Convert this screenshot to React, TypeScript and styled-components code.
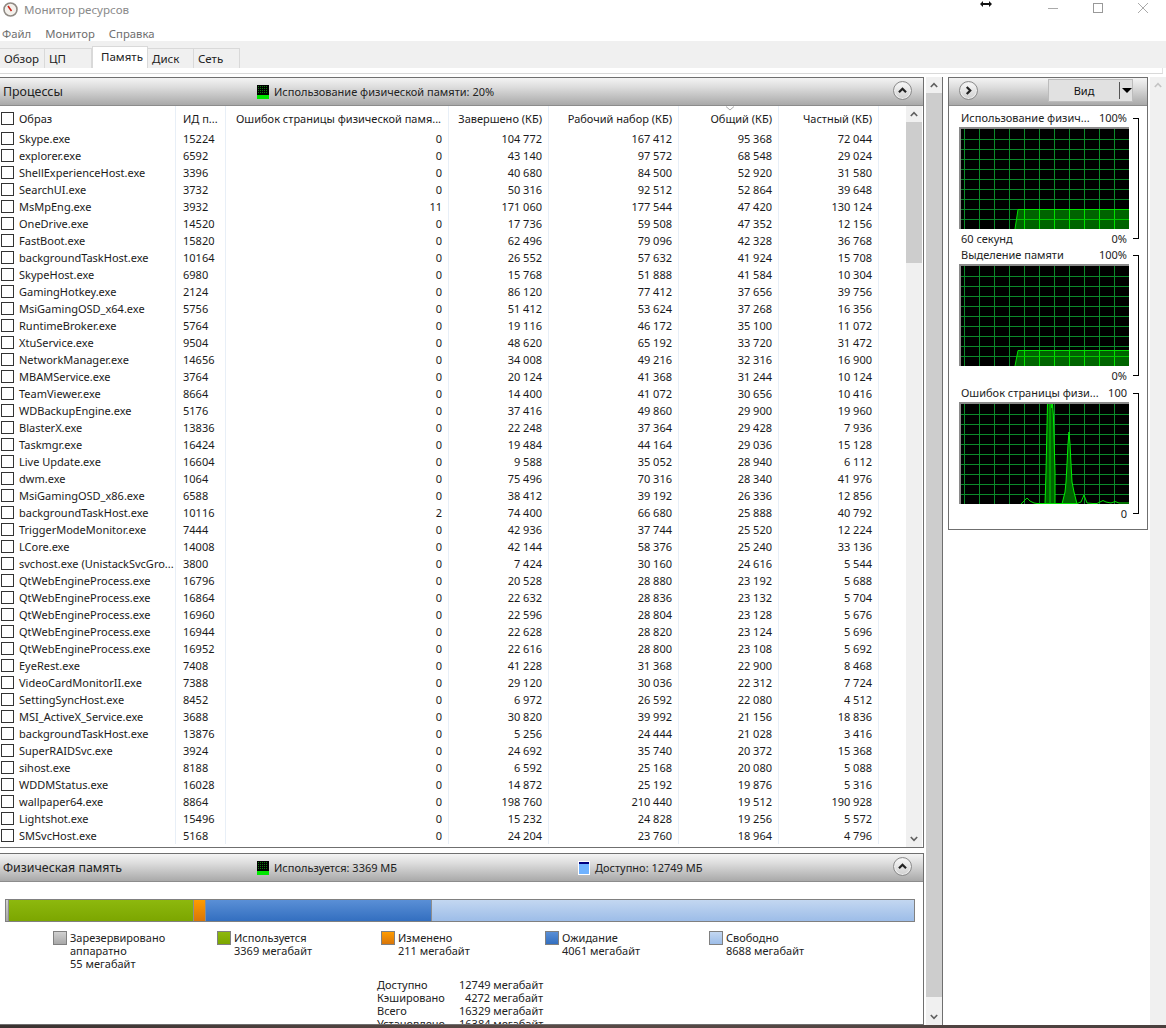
import { FC } from 'react';
import styled, { createGlobalStyle } from 'styled-components';

const Global = createGlobalStyle`
  html, body { margin: 0; padding: 0; background: #fff; }
  body { font: 11px/13px "Noto Sans", "Open Sans", sans-serif; color: #111; overflow: hidden; }
`

type Row = [string, string, string, string, string, string, string]
const rows: Row[] = [
  ['Skype.exe', '15224', '0', '104 772', '167 412', '95 368', '72 044'],
  ['explorer.exe', '6592', '0', '43 140', '97 572', '68 548', '29 024'],
  ['ShellExperienceHost.exe', '3396', '0', '40 680', '84 500', '52 920', '31 580'],
  ['SearchUI.exe', '3732', '0', '50 316', '92 512', '52 864', '39 648'],
  ['MsMpEng.exe', '3932', '11', '171 060', '177 544', '47 420', '130 124'],
  ['OneDrive.exe', '14520', '0', '17 736', '59 508', '47 352', '12 156'],
  ['FastBoot.exe', '15820', '0', '62 496', '79 096', '42 328', '36 768'],
  ['backgroundTaskHost.exe', '10164', '0', '26 552', '57 632', '41 924', '15 708'],
  ['SkypeHost.exe', '6980', '0', '15 768', '51 888', '41 584', '10 304'],
  ['GamingHotkey.exe', '2124', '0', '86 120', '77 412', '37 656', '39 756'],
  ['MsiGamingOSD_x64.exe', '5756', '0', '51 412', '53 624', '37 268', '16 356'],
  ['RuntimeBroker.exe', '5764', '0', '19 116', '46 172', '35 100', '11 072'],
  ['XtuService.exe', '9504', '0', '48 620', '65 192', '33 720', '31 472'],
  ['NetworkManager.exe', '14656', '0', '34 008', '49 216', '32 316', '16 900'],
  ['MBAMService.exe', '3764', '0', '20 124', '41 368', '31 244', '10 124'],
  ['TeamViewer.exe', '8664', '0', '14 400', '41 072', '30 656', '10 416'],
  ['WDBackupEngine.exe', '5176', '0', '37 416', '49 860', '29 900', '19 960'],
  ['BlasterX.exe', '13836', '0', '22 248', '37 364', '29 428', '7 936'],
  ['Taskmgr.exe', '16424', '0', '19 484', '44 164', '29 036', '15 128'],
  ['Live Update.exe', '16604', '0', '9 588', '35 052', '28 940', '6 112'],
  ['dwm.exe', '1064', '0', '75 496', '70 316', '28 340', '41 976'],
  ['MsiGamingOSD_x86.exe', '6588', '0', '38 412', '39 192', '26 336', '12 856'],
  ['backgroundTaskHost.exe', '10116', '2', '74 400', '66 680', '25 888', '40 792'],
  ['TriggerModeMonitor.exe', '7444', '0', '42 936', '37 744', '25 520', '12 224'],
  ['LCore.exe', '14008', '0', '42 144', '58 376', '25 240', '33 136'],
  ['svchost.exe (UnistackSvcGro...', '3800', '0', '7 424', '30 160', '24 616', '5 544'],
  ['QtWebEngineProcess.exe', '16796', '0', '20 528', '28 880', '23 192', '5 688'],
  ['QtWebEngineProcess.exe', '16864', '0', '22 632', '28 836', '23 132', '5 704'],
  ['QtWebEngineProcess.exe', '16960', '0', '22 596', '28 804', '23 128', '5 676'],
  ['QtWebEngineProcess.exe', '16944', '0', '22 628', '28 820', '23 124', '5 696'],
  ['QtWebEngineProcess.exe', '16952', '0', '22 616', '28 800', '23 108', '5 692'],
  ['EyeRest.exe', '7408', '0', '41 228', '31 368', '22 900', '8 468'],
  ['VideoCardMonitorII.exe', '7388', '0', '29 120', '30 036', '22 312', '7 724'],
  ['SettingSyncHost.exe', '8452', '0', '6 972', '26 592', '22 080', '4 512'],
  ['MSI_ActiveX_Service.exe', '3688', '0', '30 820', '39 992', '21 156', '18 836'],
  ['backgroundTaskHost.exe', '13876', '0', '5 256', '24 444', '21 028', '3 416'],
  ['SuperRAIDSvc.exe', '3924', '0', '24 692', '35 740', '20 372', '15 368'],
  ['sihost.exe', '8188', '0', '6 592', '25 168', '20 080', '5 088'],
  ['WDDMStatus.exe', '16028', '0', '14 872', '25 192', '19 876', '5 316'],
  ['wallpaper64.exe', '8864', '0', '198 760', '210 440', '19 512', '190 928'],
  ['Lightshot.exe', '15496', '0', '15 232', '24 828', '19 256', '5 572'],
  ['SMSvcHost.exe', '5168', '0', '24 204', '23 760', '18 964', '4 796'],
]

const Window = styled.div`
  width: 1166px;
  height: 1028px;
  display: flex;
  flex-direction: column;
  overflow: hidden;
  position: relative;
`
const TitleBar = styled.div`
  height: 19px;
  flex: none;
  display: flex;
  align-items: center;
  padding-left: 3px;
  gap: 6px;
  font-size: 11.6px;
  color: #8a8a8a;
`
const WinButtons = styled.div`
  margin-left: auto;
  display: flex;
  align-items: flex-start;
  align-self: flex-start;
  padding: 3px 18px 0 0;
  gap: 35px;
  svg { display: block; width: 10px; height: 10px; }
`
const ResizeCursor = styled.svg`
  position: absolute;
  left: 980px;
  top: 0;
  width: 12px;
  height: 8px;
`
const MenuBar = styled.div`
  height: 22px;
  flex: none;
  display: flex;
  align-items: center;
  padding: 6px 0 0 2px;
  box-sizing: border-box;
  gap: 14px;
  font-size: 11.3px;
  color: #6e6e6e;
`
const TabStrip = styled.div`
  height: 27px;
  flex: none;
  background: #f0f0f0;
  display: flex;
  align-items: flex-end;
`
const Tab = styled.div<{ $w: number; $active?: boolean }>`
  width: ${p => p.$w}px;
  height: ${p => (p.$active ? 22 : 20)}px;
  box-sizing: border-box;
  display: flex;
  align-items: center;
  padding-left: ${p => (p.$active ? 8 : 4)}px;
  background: ${p => (p.$active ? '#fff' : '#f0f0f0')};
  border: 1px solid #d9d9d9;
  border-width: 1px 1px 0 ${p => (p.$active ? 1 : 0)}px;
  color: #222;
  font-size: 11.5px;
  padding-bottom: ${p => (p.$active ? 2 : 0)}px;
`
const TabGap = styled.div`
  height: 5px;
  flex: none;
  margin-right: 3px;
  border-bottom: 1px solid #d9d9d9;
  border-right: 1px solid #e2e2e2;
`
const Main = styled.div`
  flex: 1;
  min-height: 0;
  display: flex;
  padding-top: 3px;
`
const LeftColumn = styled.div`
  width: 924px;
  flex: none;
  display: flex;
  flex-direction: column;
  gap: 5px;
`
const Panel = styled.section<{ $h?: number }>`
  ${p => (p.$h ? `height: ${p.$h}px; flex: none;` : 'flex: 1; min-height: 0;')}
  border: 1px solid #6f6f6f;
  border-left: 0;
  box-sizing: border-box;
  display: flex;
  flex-direction: column;
  overflow: hidden;
`
const PanelHeader = styled.header`
  height: 28px;
  flex: none;
  box-sizing: border-box;
  display: flex;
  align-items: center;
  background: linear-gradient(#f4f4f4 0%, #dcdcdc 35%, #a9a9a9 100%);
  border-bottom: 1px solid #8c8c8c;
  position: relative;
`
const PanelTitle = styled.h2`
  margin: 0 0 0 3px;
  width: 254px;
  font: 400 12.4px/18px "Noto Sans", sans-serif;
  color: #222;
`
const Indicator = styled.div<{ $w?: number }>`
  display: flex;
  align-items: center;
  gap: 5px;
  color: #222;
  font-size: 11px;
  ${p => p.$w && `width: ${p.$w}px; flex: none;`}
`
const Swatch = styled.svg`
  width: 12px;
  height: 14px;
  flex: none;
`
const CircleBtn = styled.button<{ $right?: number; $left?: number }>`
  width: 19px;
  height: 19px;
  padding: 0;
  margin-top: -2px;
  border-radius: 50%;
  border: 1px solid #8b8b8b;
  background: linear-gradient(#fafafa, #cfcfcf);
  display: flex;
  align-items: center;
  justify-content: center;
  flex: none;
  box-shadow: inset 0 0 0 1px #ededed;
  ${p => p.$right !== undefined && `margin-left: auto; margin-right: ${p.$right}px;`}
  ${p => p.$left !== undefined && `margin-left: ${p.$left}px;`}
  svg { width: 11px; height: 11px; }
`
const TableArea = styled.div`
  flex: 1;
  min-height: 0;
  display: flex;
`
const Table = styled.div`
  flex: 1;
  min-width: 0;
`
const cols = '176px 50px 223px 100px 130px 100px 100px 27px'
const HeadRow = styled.div`
  display: grid;
  grid-template-columns: ${cols};
  height: 24px;
  align-items: stretch;
  position: relative;
`
const DataRow = styled.div`
  display: grid;
  grid-template-columns: ${cols};
  height: 17px;
`
const Cell = styled.div<{ $num?: boolean; $pad?: number }>`
  display: flex;
  align-items: center;
  border-right: 1px solid #e8eff7;
  box-sizing: border-box;
  white-space: nowrap;
  overflow: hidden;
  justify-content: ${p => (p.$num ? 'flex-end' : 'flex-start')};
  padding: ${p => (p.$num ? `0 ${p.$pad ?? 6}px 0 0` : `0 0 0 ${p.$pad ?? 7}px`)};
  color: #1a1a1a;
`
const Check = styled.span`
  width: 13px;
  height: 13px;
  flex: none;
  box-sizing: border-box;
  border: 1px solid #333;
  background: #fff;
  margin-right: 5px;
`
const SortMark = styled.svg`
  position: absolute;
  left: 725px;
  top: 0;
  width: 10px;
  height: 5px;
`
const Scrollbar = styled.div`
  width: 16px;
  flex: none;
  background: #f0f0f0;
  display: flex;
  flex-direction: column;
`
const ScrollArrow = styled.div`
  height: 16px;
  flex: none;
  display: flex;
  align-items: center;
  justify-content: center;
  svg { width: 8px; height: 6px; }
`
const Thumb = styled.div<{ $h: number }>`
  height: ${p => p.$h}px;
  flex: none;
  background: #cdcdcd;
`
const Spacer = styled.div`
  flex: 1;
`
const InnerScrollWrap = styled.div`
  flex: none;
  margin-right: 1px;
  display: flex;
`
const MemoryBody = styled.div`
  padding: 17px 0 0 5px;
`
const Bar = styled.div`
  width: 910px;
  height: 23px;
  box-sizing: border-box;
  border: 1px solid #808080;
  display: flex;
`
const Seg = styled.div<{ $w?: number; $c: [string, string] }>`
  ${p => (p.$w ? `width: ${p.$w}px; flex: none;` : 'flex: 1;')}
  box-sizing: border-box;
  background: linear-gradient(${p => p.$c[0]}, ${p => p.$c[1]});
  & + & { border-left: 1px solid #8d8d8d; }
`
const Legend = styled.div`
  display: grid;
  grid-template-columns: repeat(5, 164px);
  padding-left: 48px;
  margin-top: 9px;
  height: 47px;
`
const LegendItem = styled.div`
  display: flex;
  gap: 3px;
  color: #222;
`
const LegendBox = styled.span<{ $c: [string, string] }>`
  width: 14px;
  height: 14px;
  flex: none;
  box-sizing: border-box;
  border: 1px solid #808080;
  background: linear-gradient(${p => p.$c[0]}, ${p => p.$c[1]});
`
const Summary = styled.div`
  display: grid;
  grid-template-columns: 82px 84px;
  padding-left: 372px;
  color: #222;
  white-space: nowrap;
  > span:nth-child(even) { text-align: right; }
`
const OuterBar = styled.div`
  width: 17px;
  margin-left: 2px;
  box-sizing: border-box;
  border-right: 1px solid #6f6f6f;
  flex: none;
  display: flex;
`
const RightPanel = styled.section`
  width: 200px;
  height: 453px;
  margin-left: 5px;
  flex: none;
  box-sizing: border-box;
  border: 1px solid #6f6f6f;
  display: flex;
  flex-direction: column;
`
const ViewButton = styled.div`
  margin: -2px 14px 0 auto;
  width: 85px;
  height: 23px;
  box-sizing: border-box;
  background: #e1e1e1;
  border: 1px solid #bcbcbc;
  display: flex;
  align-items: center;
  color: #111;
  font-size: 11px;
`
const ViewLabel = styled.span`
  width: 71px;
  text-align: center;
  height: 17px;
  line-height: 17px;
  border-right: 1px solid #555;
`
const ViewArrow = styled.span`
  margin-left: 2px;
  width: 0;
  height: 0;
  border: 5px solid transparent;
  border-top: 5px solid #000;
  border-bottom: 0;
`
const GraphList = styled.div`
  padding: 5px 0 0 10px;
`
const GraphBlock = styled.div<{ $mt?: number }>`
  display: grid;
  grid-template-columns: 170px 9px;
  grid-template-rows: 16px 102px 19px;
  margin-top: ${p => p.$mt ?? 0}px;
  color: #222;
`
const GraphLabel = styled.div`
  display: flex;
  justify-content: space-between;
  padding: 0 2px;
  white-space: nowrap;
  line-height: 14px;
`
const GraphFoot = styled(GraphLabel)`
  grid-row: 3;
  align-items: center;
  line-height: 19px;
`
const Bracket = styled.div`
  grid-column: 2;
  grid-row: 1 / 4;
  margin: 7px 0 9px 4px;
  box-sizing: border-box;
  border: 1px solid #000;
  border-left: 0;
  width: 6px;
`
const GraphSvg = styled.svg`
  display: block;
  width: 170px;
  height: 102px;
  grid-column: 1;
  grid-row: 2;
`
const RightBar = styled.div`
  margin-left: 2px;
  width: 16px;
  flex: none;
  background: #f0f0f0;
  height: 100%;
`
const DesktopEdge = styled.div`
  height: 3px;
  flex: none;
  background: linear-gradient(90deg, #3a3230, #5a4a46 45%, #4a403e);
`

const Chevron: FC<{ dir: 'up' | 'down' | 'right'; color?: string }> = ({ dir, color = '#222' }) => {
  const d = dir === 'up' ? 'M1.8 6.6 5 3.4l3.2 3.2' : dir === 'down' ? 'M1.8 3.4 5 6.6l3.2-3.2' : 'M3.4 1.8 6.6 5l-3.2 3.2'
  return (
    <svg viewBox="0 0 10 10" fill="none">
      <path d={d} stroke={color} strokeWidth="2" />
    </svg>
  )
}

const ArrowGlyph: FC<{ up?: boolean; color?: string }> = ({ up, color = '#606060' }) => (
  <svg viewBox="0 0 8 6" fill="none">
    <path d={up ? 'M.8 5 4 1.6 7.2 5' : 'M.8 1 4 4.4 7.2 1'} stroke={color} strokeWidth="1.6" />
  </svg>
)

const GreenMark: FC = () => (
  <Swatch viewBox="0 0 12 14">
    <rect width="12" height="14" fill="#000" />
    <rect y="10" width="12" height="4" fill="#00e600" />
    {[1, 3, 5, 7].map(y => [1, 3, 5, 7, 9].map(x => <rect key={`${x}-${y}`} x={x} y={y} width="1" height="1" fill="#0a7a0a" />))}
  </Swatch>
)

const BlueMark: FC = () => (
  <Swatch viewBox="0 0 12 14">
    <rect width="12" height="14" fill="#fff" />
    <rect x="1" y="1" width="10" height="12" fill="#6fb2ff" />
    <rect x="1" y="1" width="10" height="2" fill="#000080" />
  </Swatch>
)

const gridX = Array.from({ length: 11 }, (_, i) => 5.5 + i * 15)
const gridY = Array.from({ length: 9 }, (_, i) => 12.5 + i * 10)

const Graph: FC<{ children: React.ReactNode }> = ({ children }) => (
  <GraphSvg viewBox="0 0 170 102">
    <rect width="170" height="102" fill="#000" />
    {gridX.map(x => <line key={x} x1={x} x2={x} y1="0" y2="102" stroke="#0b8a2a" />)}
    {gridY.map(y => <line key={y} x1="0" x2="170" y1={y} y2={y} stroke="#0b8a2a" />)}
    {children}
    <path d="M1 102V1h169" fill="none" stroke="#8a8a8a" strokeWidth="2" />
  </GraphSvg>
)

const Plateau: FC<{ top: number }> = ({ top }) => {
  const id = `clip${top}`
  const pts = `56,102 59,${top} 170,${top} 170,102`
  return (
    <>
      <clipPath id={id}><polygon points={pts} /></clipPath>
      <polygon points={pts} fill="#006400" />
      <g clipPath={`url(#${id})`}>
        {gridX.map(x => <line key={x} x1={x} x2={x} y1="0" y2="102" stroke="#00e000" />)}
        {gridY.map(y => <line key={y} x1="0" x2="170" y1={y} y2={y} stroke="#00c800" />)}
      </g>
      <polyline points={`56,102 59,${top + 0.5} 170,${top + 0.5}`} fill="none" stroke="#00e000" />
    </>
  )
}

const Spikes: FC = () => (
  <>
    <polygon points="86,102 87,70 88.5,1 92,1 92.8,6 93.5,1 94.5,16 96,70 96,102" fill="#006400" stroke="#00f000" />
    <line x1="91" x2="91" y1="0" y2="102" stroke="#00d000" />
    <polygon points="103,102 106,90 107,80 108,62 109,42 110,30 111,42 112,62 113,80 115,90 118,102" fill="#006400" stroke="#00f000" />
    <polyline
      points="62,102 65,99 68,96 71,99 75,101 78,101.5 82,101.5 85,101.5 118,101.5 122,100 125,93 128,101 134,101.5 138,101.5 141,100 144,98.5 147,100 152,101 156,99.5 160,101 170,101"
      fill="none"
      stroke="#00e000"
    />
  </>
)

const green: [string, string] = ['#8db80e', '#7ca600']
const orange: [string, string] = ['#ff9c00', '#d87508']
const blue: [string, string] = ['#5a8fd6', '#336fc0']
const light: [string, string] = ['#c3d7f1', '#9dbde8']
const gray: [string, string] = ['#d0d0d0', '#a8a8a8']

const legend: { c: [string, string]; lines: string[] }[] = [
  { c: gray, lines: ['Зарезервировано', 'аппаратно', '55 мегабайт'] },
  { c: green, lines: ['Используется', '3369 мегабайт'] },
  { c: orange, lines: ['Изменено', '211 мегабайт'] },
  { c: blue, lines: ['Ожидание', '4061 мегабайт'] },
  { c: light, lines: ['Свободно', '8688 мегабайт'] },
]

const summary = [
  ['Доступно', '12749 мегабайт'],
  ['Кэшировано', '4272 мегабайт'],
  ['Всего', '16329 мегабайт'],
  ['Установлено', '16384 мегабайт'],
]

export default function App() {
  return (
    <Window>
      <Global />
      <TitleBar>
        <svg width="15" height="15" viewBox="0 0 15 15">
          <circle cx="7.5" cy="7.5" r="6.5" fill="#f4f1ec" stroke="#8f8a84" strokeWidth="1.6" />
          <path d="M5 4l3.5 5" stroke="#c8261c" strokeWidth="1.6" />
        </svg>
        Монитор ресурсов
        <WinButtons>
          <svg viewBox="0 0 10 10"><path d="M0 5.5h10" stroke="#aaa" /></svg>
          <svg viewBox="0 0 10 10"><rect x=".5" y=".5" width="9" height="9" fill="none" stroke="#999" /></svg>
          <svg viewBox="0 0 10 10"><path d="M0 0l10 10M10 0 0 10" stroke="#aaa" /></svg>
        </WinButtons>
      </TitleBar>
      <ResizeCursor viewBox="0 0 12 8">
        <path d="M0 4l3-3v2h6V1l3 3-3 3V5H3v2z" fill="#111" />
      </ResizeCursor>
      <MenuBar>
        <span>Файл</span>
        <span>Монитор</span>
        <span>Справка</span>
      </MenuBar>
      <TabStrip>
        <Tab $w={45}>Обзор</Tab>
        <Tab $w={47}>ЦП</Tab>
        <Tab $w={56} $active>Память</Tab>
        <Tab $w={46}>Диск</Tab>
        <Tab $w={46}>Сеть</Tab>
      </TabStrip>
      <TabGap />
      <Main>
        <LeftColumn>
          <Panel>
            <PanelHeader>
              <PanelTitle>Процессы</PanelTitle>
              <Indicator><GreenMark />Использование физической памяти: 20%</Indicator>
              <CircleBtn $right={11}><Chevron dir="up" /></CircleBtn>
            </PanelHeader>
            <TableArea>
              <Table>
                <HeadRow>
                  <Cell $pad={1}><Check />Образ</Cell>
                  <Cell>ИД п...</Cell>
                  <Cell $pad={10}>Ошибок страницы физической памя...</Cell>
                  <Cell $num>Завершено (КБ)</Cell>
                  <Cell $num>Рабочий набор (КБ)</Cell>
                  <Cell $num>Общий (КБ)</Cell>
                  <Cell $num>Частный (КБ)</Cell>
                  <span />
                  <SortMark viewBox="0 0 10 5"><path d="M1 .5l4 3.5 4-3.5" fill="none" stroke="#a8a8a8" /></SortMark>
                </HeadRow>
                {rows.map((r, i) => (
                  <DataRow key={i}>
                    <Cell $pad={1}><Check />{r[0]}</Cell>
                    <Cell>{r[1]}</Cell>
                    <Cell $num>{r[2]}</Cell>
                    <Cell $num>{r[3]}</Cell>
                    <Cell $num>{r[4]}</Cell>
                    <Cell $num>{r[5]}</Cell>
                    <Cell $num>{r[6]}</Cell>
                    <span />
                  </DataRow>
                ))}
              </Table>
              <InnerScrollWrap>
                <Scrollbar>
                  <ScrollArrow><ArrowGlyph up /></ScrollArrow>
                  <Thumb $h={141} />
                  <Spacer />
                  <ScrollArrow><ArrowGlyph /></ScrollArrow>
                </Scrollbar>
              </InnerScrollWrap>
            </TableArea>
          </Panel>
          <Panel $h={172}>
            <PanelHeader>
              <PanelTitle>Физическая память</PanelTitle>
              <Indicator $w={321}><GreenMark />Используется: 3369 МБ</Indicator>
              <Indicator><BlueMark />Доступно: 12749 МБ</Indicator>
              <CircleBtn $right={11}><Chevron dir="up" /></CircleBtn>
            </PanelHeader>
            <MemoryBody>
              <Bar>
                <Seg $w={2} $c={gray} />
                <Seg $w={185} $c={green} />
                <Seg $w={12} $c={orange} />
                <Seg $w={226} $c={blue} />
                <Seg $c={light} />
              </Bar>
              <Legend>
                {legend.map(l => (
                  <LegendItem key={l.lines[0]}>
                    <LegendBox $c={l.c} />
                    <div>{l.lines.map(t => <div key={t}>{t}</div>)}</div>
                  </LegendItem>
                ))}
              </Legend>
              <Summary>
                {summary.map(([a, b]) => [<span key={a}>{a}</span>, <span key={b}>{b}</span>])}
              </Summary>
            </MemoryBody>
          </Panel>
        </LeftColumn>
        <OuterBar>
          <Scrollbar>
            <ScrollArrow><ArrowGlyph up /></ScrollArrow>
            <Thumb $h={904} />
            <Spacer />
            <ScrollArrow><ArrowGlyph /></ScrollArrow>
          </Scrollbar>
        </OuterBar>
        <RightPanel>
          <PanelHeader>
            <CircleBtn $left={10}><Chevron dir="right" /></CircleBtn>
            <ViewButton>
              <ViewLabel>Вид</ViewLabel>
              <ViewArrow />
            </ViewButton>
          </PanelHeader>
          <GraphList>
            <GraphBlock>
              <GraphLabel><span>Использование физич...</span><span>100%</span></GraphLabel>
              <Graph><Plateau top={82} /></Graph>
              <GraphFoot><span>60 секунд</span><span>0%</span></GraphFoot>
              <Bracket />
            </GraphBlock>
            <GraphBlock>
              <GraphLabel><span>Выделение памяти</span><span>100%</span></GraphLabel>
              <Graph><Plateau top={86} /></Graph>
              <GraphFoot><span /><span>0%</span></GraphFoot>
              <Bracket />
            </GraphBlock>
            <GraphBlock $mt={1}>
              <GraphLabel><span>Ошибок страницы физи...</span><span>100</span></GraphLabel>
              <Graph><Spikes /></Graph>
              <GraphFoot><span /><span>0</span></GraphFoot>
              <Bracket />
            </GraphBlock>
          </GraphList>
        </RightPanel>
        <RightBar>
          <ScrollArrow><ArrowGlyph up color="#c4c4c4" /></ScrollArrow>
        </RightBar>
      </Main>
      <DesktopEdge />
    </Window>
  )
}
